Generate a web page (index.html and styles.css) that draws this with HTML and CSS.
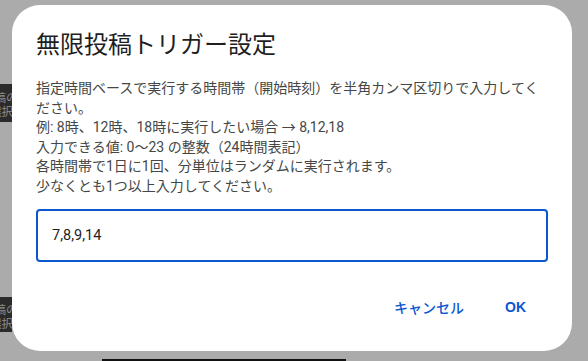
FILE: index.html
```html
<!DOCTYPE html>
<html lang="ja">
<head>
<meta charset="utf-8">
<title>無限投稿トリガー設定</title>
<link rel="stylesheet" href="styles.css">
</head>
<body>
<div class="page">
  <div class="strip strip-top">
    <div class="strip-row row-a">投稿の</div>
    <div class="strip-row row-b">選択</div>
  </div>
  <div class="strip strip-bottom">
    <div class="strip-row row-a">投稿の</div>
    <div class="strip-row row-b">選択</div>
  </div>
  <div class="bottom-line"></div>
</div>
<div class="dialog" role="dialog">
  <h1 class="dialog-title">無限投稿トリガー設定</h1>
  <div class="dialog-text">
    <p>指定時間ベースで実行する時間帯（開始時刻）を半角カンマ区切りで入力してください。</p>
    <p>例: 8時、12時、18時に実行したい場合 → 8,12,18</p>
    <p>入力できる値: 0〜23 の整数（24時間表記）</p>
    <p>各時間帯で1日に1回、分単位はランダムに実行されます。</p>
    <p>少なくとも1つ以上入力してください。</p>
  </div>
  <input class="dialog-input" type="text" value="7,8,9,14">
  <div class="dialog-actions">
    <button class="btn btn-cancel">キャンセル</button>
    <button class="btn btn-ok">OK</button>
  </div>
</div>
</body>
</html>
```
FILE: styles.css
```css
html, body {
  margin: 0;
  padding: 0;
}
body {
  width: 588px;
  height: 361px;
  overflow: hidden;
  background: #ababab;
  position: relative;
  font-family: Roboto, "Noto Sans CJK JP", sans-serif;
}
.page {
  display: flex;
  flex-direction: column;
  height: 361px;
}
.strip {
  width: 12px;
  background: #2b2b2b;
  overflow: hidden;
  box-sizing: border-box;
  color: #8d8d8d;
  font-family: "Noto Sans CJK JP", sans-serif;
  font-size: 11.5px;
  line-height: 14px;
  white-space: nowrap;
}
.strip-top {
  margin-top: 84px;
  height: 38px;
  padding-top: 6px;
}
.strip-bottom {
  margin-top: 175px;
  height: 35px;
  padding-top: 5px;
}
.row-a { margin-left: -17px; }
.row-b { margin-left: -10px; }
.bottom-line {
  margin-top: auto;
  margin-left: 102px;
  width: 244px;
  height: 2px;
  background: #111;
}
.dialog {
  position: absolute;
  left: 12px;
  top: 5px;
  width: 560px;
  height: 346px;
  box-sizing: border-box;
  background: #fff;
  border-radius: 28px;
  padding: 22px 24px 24px;
  display: flex;
  flex-direction: column;
}
.dialog-title {
  margin: 0;
  font-family: "Noto Sans CJK JP", sans-serif;
  font-size: 24px;
  font-weight: 400;
  line-height: 32px;
  color: #1f1f1f;
}
.dialog-text {
  margin-top: 20px;
  font-size: 14px;
  line-height: 19.6px;
  color: #444746;
}
.dialog-text p {
  margin: 0;
}
.dialog-input {
  margin-top: 12px;
  height: 53px;
  box-sizing: border-box;
  width: 100%;
  border: 2px solid #0b57d0;
  border-radius: 4px;
  padding: 0 14px;
  font-family: Roboto, "Noto Sans CJK JP", sans-serif;
  font-size: 14.5px;
  color: #1f1f1f;
  outline: none;
}
.dialog-actions {
  margin-top: auto;
  display: flex;
  justify-content: flex-end;
}
.btn {
  height: 40px;
  border: 0;
  background: transparent;
  font-family: Roboto, "Noto Sans CJK JP", sans-serif;
  font-size: 14px;
  font-weight: 500;
  color: #0b57d0;
  padding: 0 21px;
}
.btn-ok {
  font-family: "Liberation Sans", Roboto, sans-serif;
  font-weight: 700;
  padding: 0 22px 0 20px;
}
```
